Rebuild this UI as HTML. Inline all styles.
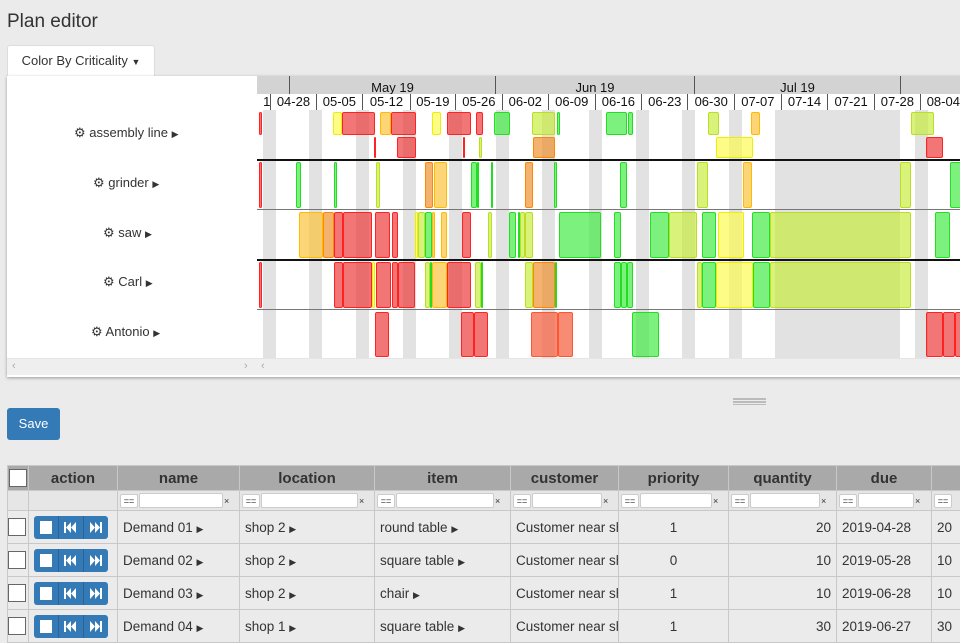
<!DOCTYPE html>
<html><head><meta charset="utf-8"><style>
*{box-sizing:border-box;margin:0;padding:0}
body{width:960px;height:633px;overflow:hidden;background:#ebebeb;font-family:"Liberation Sans",sans-serif;color:#333;position:relative}
.a{position:absolute}
.title{left:7px;top:11px;font-size:19px;color:#333}
.btn{left:7px;top:45px;width:148px;height:31px;background:#fff;border:1px solid #ddd;border-bottom:none;border-radius:3px 3px 0 0;font-size:13px;line-height:30px;text-align:center}
.panel{left:7px;top:76px;width:960px;height:301px;background:#fff;box-shadow:0 1px 3px rgba(0,0,0,.35);overflow:hidden}
.lab{font-size:13px;color:#333;white-space:nowrap}
.hdr{background:#d3d3d3;font-size:13px;color:#111;text-align:center;border-right:1px solid #555}
.wk{top:94px;height:16px;line-height:16px;font-size:13px;text-align:center;background:#fff;border-right:1px solid #555;color:#111}
.bar{position:absolute;border:1px solid;border-radius:2px}
table{position:absolute;left:7px;top:465px;width:964px;border-collapse:collapse;font-size:13.5px;table-layout:fixed}
td,th{border:1px solid #c8c8c8;overflow:hidden;white-space:nowrap}
th{background:#a9a9a9;height:25px;font-size:15px;font-weight:bold;color:#333}
.f td{height:20px;background:#e6e6e6;padding:0 2px}
.r td{height:33px;background:#ebebeb;padding:0 5px}
.cb{display:inline-block;width:18px;height:18px;background:#fff;border:1px solid #666;vertical-align:middle}
.eq{display:inline-block;width:18px;height:14px;background:#fff;border:1px solid #ccc;border-radius:2px;font-size:9px;line-height:12px;text-align:center;vertical-align:middle}
.in{display:inline-block;height:15px;background:#fff;border:1px solid #ccc;border-radius:2px;vertical-align:middle;margin:0 1px}
.x{display:inline-block;width:9px;font-size:9px;vertical-align:middle}
.ab{display:inline-block;width:74px;height:23px;background:#337ab7;border-radius:3px;vertical-align:middle;position:relative}
.tri{font-size:9px}
</style></head><body>
<div class="a title">Plan editor</div>
<div class="a btn">Color By Criticality <span style="font-size:9px">▼</span></div>
<div class="a panel"></div>
<div class="a" style="left:257px;top:76px;width:703px;height:282px;overflow:hidden" id="g">
  <div class="a hdr" style="left:0;top:0;width:33px;height:18px"></div>
  <div class="a hdr" style="left:33px;top:0;width:206px;height:18px;line-height:24px">May 19</div>
  <div class="a hdr" style="left:239px;top:0;width:199px;height:18px;line-height:24px">Jun 19</div>
  <div class="a hdr" style="left:438px;top:0;width:206px;height:18px;line-height:24px">Jul 19</div>
  <div class="a hdr" style="left:644px;top:0;width:80px;height:18px"></div>
</div>
<div class="a" style="left:7px;top:358px;width:953px;height:17px;background:#efefef;border-top:1px solid #e5e5e5;font-size:11px;color:#aaa">
<span class="a" style="left:5px;top:1px">‹</span><span class="a" style="left:237px;top:1px">›</span><span class="a" style="left:254px;top:1px">‹</span></div>
<div class="a lab" style="left:74px;top:125px">⚙ assembly line <span class="tri">▶</span></div>
<div class="a lab" style="left:93px;top:175px">⚙ grinder <span class="tri">▶</span></div>
<div class="a lab" style="left:103px;top:225px">⚙ saw <span class="tri">▶</span></div>
<div class="a lab" style="left:103px;top:274px">⚙ Carl <span class="tri">▶</span></div>
<div class="a lab" style="left:91px;top:324px">⚙ Antonio <span class="tri">▶</span></div>
<div class="a" style="left:733px;top:398px;width:33px;height:2px;background:#bbb"></div>
<div class="a" style="left:733px;top:401px;width:33px;height:2px;background:#bbb"></div>
<div class="a" style="left:733px;top:404px;width:33px;height:1px;background:#bbb"></div>
<div class="a" style="left:7px;top:408px;width:53px;height:32px;background:#337ab7;border-radius:3px;color:#fff;font-size:13px;line-height:32px;text-align:center">Save</div>
<table>
<colgroup><col style="width:21px"><col style="width:89px"><col style="width:122px"><col style="width:135px"><col style="width:136px"><col style="width:108px"><col style="width:110px"><col style="width:108px"><col style="width:95px"><col style="width:40px"></colgroup>
<tr><th style="background:#a9a9a9"><span class="cb"></span></th><th>action</th><th>name</th><th>location</th><th>item</th><th>customer</th><th>priority</th><th>quantity</th><th>due</th><th></th></tr>
<tr class="f"><td></td><td></td><td><span class="eq">==</span><span class="in" style="width:84px"></span><span class="x">×</span></td><td><span class="eq">==</span><span class="in" style="width:97px"></span><span class="x">×</span></td><td><span class="eq">==</span><span class="in" style="width:98px"></span><span class="x">×</span></td><td><span class="eq">==</span><span class="in" style="width:70px"></span><span class="x">×</span></td><td><span class="eq">==</span><span class="in" style="width:72px"></span><span class="x">×</span></td><td><span class="eq">==</span><span class="in" style="width:70px"></span><span class="x">×</span></td><td><span class="eq">==</span><span class="in" style="width:56px"></span><span class="x">×</span></td><td><span class="eq">==</span></td></tr>
<tr class="r"><td style="padding:0"><span class="cb"></span></td><td><span class="ab"></span></td><td>Demand 01 <span class="tri">▶</span></td><td>shop 2 <span class="tri">▶</span></td><td>round table <span class="tri">▶</span></td><td>Customer near sh</td><td style="text-align:center">1</td><td style="text-align:right">20</td><td>2019-04-28</td><td>20</td></tr>
<tr class="r"><td style="padding:0"><span class="cb"></span></td><td><span class="ab"></span></td><td>Demand 02 <span class="tri">▶</span></td><td>shop 2 <span class="tri">▶</span></td><td>square table <span class="tri">▶</span></td><td>Customer near sh</td><td style="text-align:center">0</td><td style="text-align:right">10</td><td>2019-05-28</td><td>10</td></tr>
<tr class="r"><td style="padding:0"><span class="cb"></span></td><td><span class="ab"></span></td><td>Demand 03 <span class="tri">▶</span></td><td>shop 2 <span class="tri">▶</span></td><td>chair <span class="tri">▶</span></td><td>Customer near sh</td><td style="text-align:center">1</td><td style="text-align:right">10</td><td>2019-06-28</td><td>10</td></tr>
<tr class="r"><td style="padding:0"><span class="cb"></span></td><td><span class="ab"></span></td><td>Demand 04 <span class="tri">▶</span></td><td>shop 1 <span class="tri">▶</span></td><td>square table <span class="tri">▶</span></td><td>Customer near sh</td><td style="text-align:center">1</td><td style="text-align:right">30</td><td>2019-06-27</td><td>30</td></tr>
</table>
<script>
var g=document.getElementById('g'),O=257;
function d(x,y,w,h,s){var e=document.createElement('div');e.className='a';e.style.cssText='left:'+(x-O)+'px;top:'+(y-76)+'px;width:'+w+'px;height:'+h+'px;'+s;g.appendChild(e);return e;}
for(var k=-1;k<16;k++){var x=262.7+k*46.6;d(x,110,13,248,'background:#e2e2e2');}
d(787,110,113,248,'background:#e2e2e2');
var W=['1','04-28','05-05','05-12','05-19','05-26','06-02','06-09','06-16','06-23','06-30','07-07','07-14','07-21','07-28','08-04'];
var sep=[250,271.3,316.6,363.2,410.8,456,502.7,548.9,595.6,642.2,688.4,735,781.7,828.3,875,920.7,967];
for(var i=0;i<W.length;i++){var e=d(sep[i],94,sep[i+1]-sep[i],16,'');e.className='a wk';e.textContent=W[i];if(i==0){e.style.textAlign='right';}}
d(257,159,703,2,'background:#111');d(257,209,703,1,'background:#777');d(257,259,703,2,'background:#111');d(257,309,703,1,'background:#777');
var C={r:['rgba(238,60,60,.7)','#f22'],o:['rgba(240,145,50,.7)','#f80'],y:['rgba(250,195,60,.7)','#fb0'],l:['rgba(250,250,70,.65)','#ee0'],g2:['rgba(195,235,50,.65)','#bd2'],g:['rgba(70,235,70,.7)','#2d2'],s:['rgba(245,100,70,.75)','#f53']};
function B(a,y,h){a.forEach(function(b){var c=C[b[2]];var e=d(b[0],y,b[1]-b[0],h,'');e.className='bar';e.style.background=c[0];e.style.borderColor=c[1];});}
B([[259,262,'r'],[333,342,'l'],[342,375,'r'],[380,391,'y'],[391,416,'r'],[432,441,'l'],[447,471,'r'],[476,483,'r'],[494,510,'g'],[532,555,'g2'],[557,560,'g'],[606,627,'g'],[628,633,'g'],[708,719,'g2'],[751,760,'y'],[911,934,'g2']],112,23);
B([[374,376,'r'],[397,416,'r'],[463,465,'r'],[479,482,'g2'],[533,555,'o'],[716,753,'l'],[926,943,'r']],137,21);
B([[259,262,'r'],[296,301,'g'],[334,337,'g'],[376,380,'g2'],[425,433,'o'],[434,447,'y'],[471,477,'g'],[477,479,'g'],[491,493,'g'],[525,533,'o'],[554,557,'g'],[620,627,'g'],[697,708,'g2'],[743,752,'y'],[900,911,'g2'],[950,962,'g']],162,46);
B([[299,323,'y'],[323,334,'o'],[334,343,'r'],[343,372,'r'],[375,390,'r'],[392,398,'r'],[415,418,'l'],[418,425,'g2'],[425,432,'g'],[432,435,'y'],[441,447,'y'],[462,471,'r'],[488,492,'g2'],[509,516,'g'],[518,520,'g'],[520,525,'g2'],[525,533,'g2'],[559,601,'g'],[614,621,'g'],[650,669,'g'],[669,697,'g2'],[702,716,'g'],[718,744,'l'],[752,770,'g'],[770,911,'g2'],[935,950,'g']],212,46);
B([[259,262,'r'],[334,343,'r'],[343,372,'r'],[372,375,'l'],[376,391,'r'],[392,398,'r'],[398,415,'r'],[425,430,'g2'],[430,432,'g'],[432,447,'y'],[447,471,'r'],[475,481,'g2'],[481,483,'g'],[525,533,'g2'],[533,555,'o'],[555,557,'g'],[614,621,'g'],[621,627,'g'],[627,633,'g'],[697,702,'g2'],[702,716,'g'],[716,753,'l'],[753,770,'g'],[770,911,'g2']],262,46);
B([[375,389,'r'],[461,474,'r'],[474,488,'r'],[531,558,'s'],[558,573,'s'],[632,659,'g'],[926,943,'r'],[943,955,'r'],[955,962,'r']],312,45);
document.querySelectorAll('.ab').forEach(function(a){a.innerHTML='<svg width="74" height="23" viewBox="0 0 74 23"><rect x="24" y="0" width="1" height="23" fill="#2a6496"/><rect x="49" y="0" width="1" height="23" fill="#2a6496"/><rect x="6" y="5" width="12" height="13" fill="#fff"/><path d="M30 6h2v11h-2zM32 11.5l5-5.5v11zM37 11.5l5-5.5v11z" fill="#fff"/><path d="M56 6l5 5.5-5 5.5zM61 6l5 5.5-5 5.5zM66 6h2v11h-2z" fill="#fff"/></svg>';});
</script>
</body></html>
